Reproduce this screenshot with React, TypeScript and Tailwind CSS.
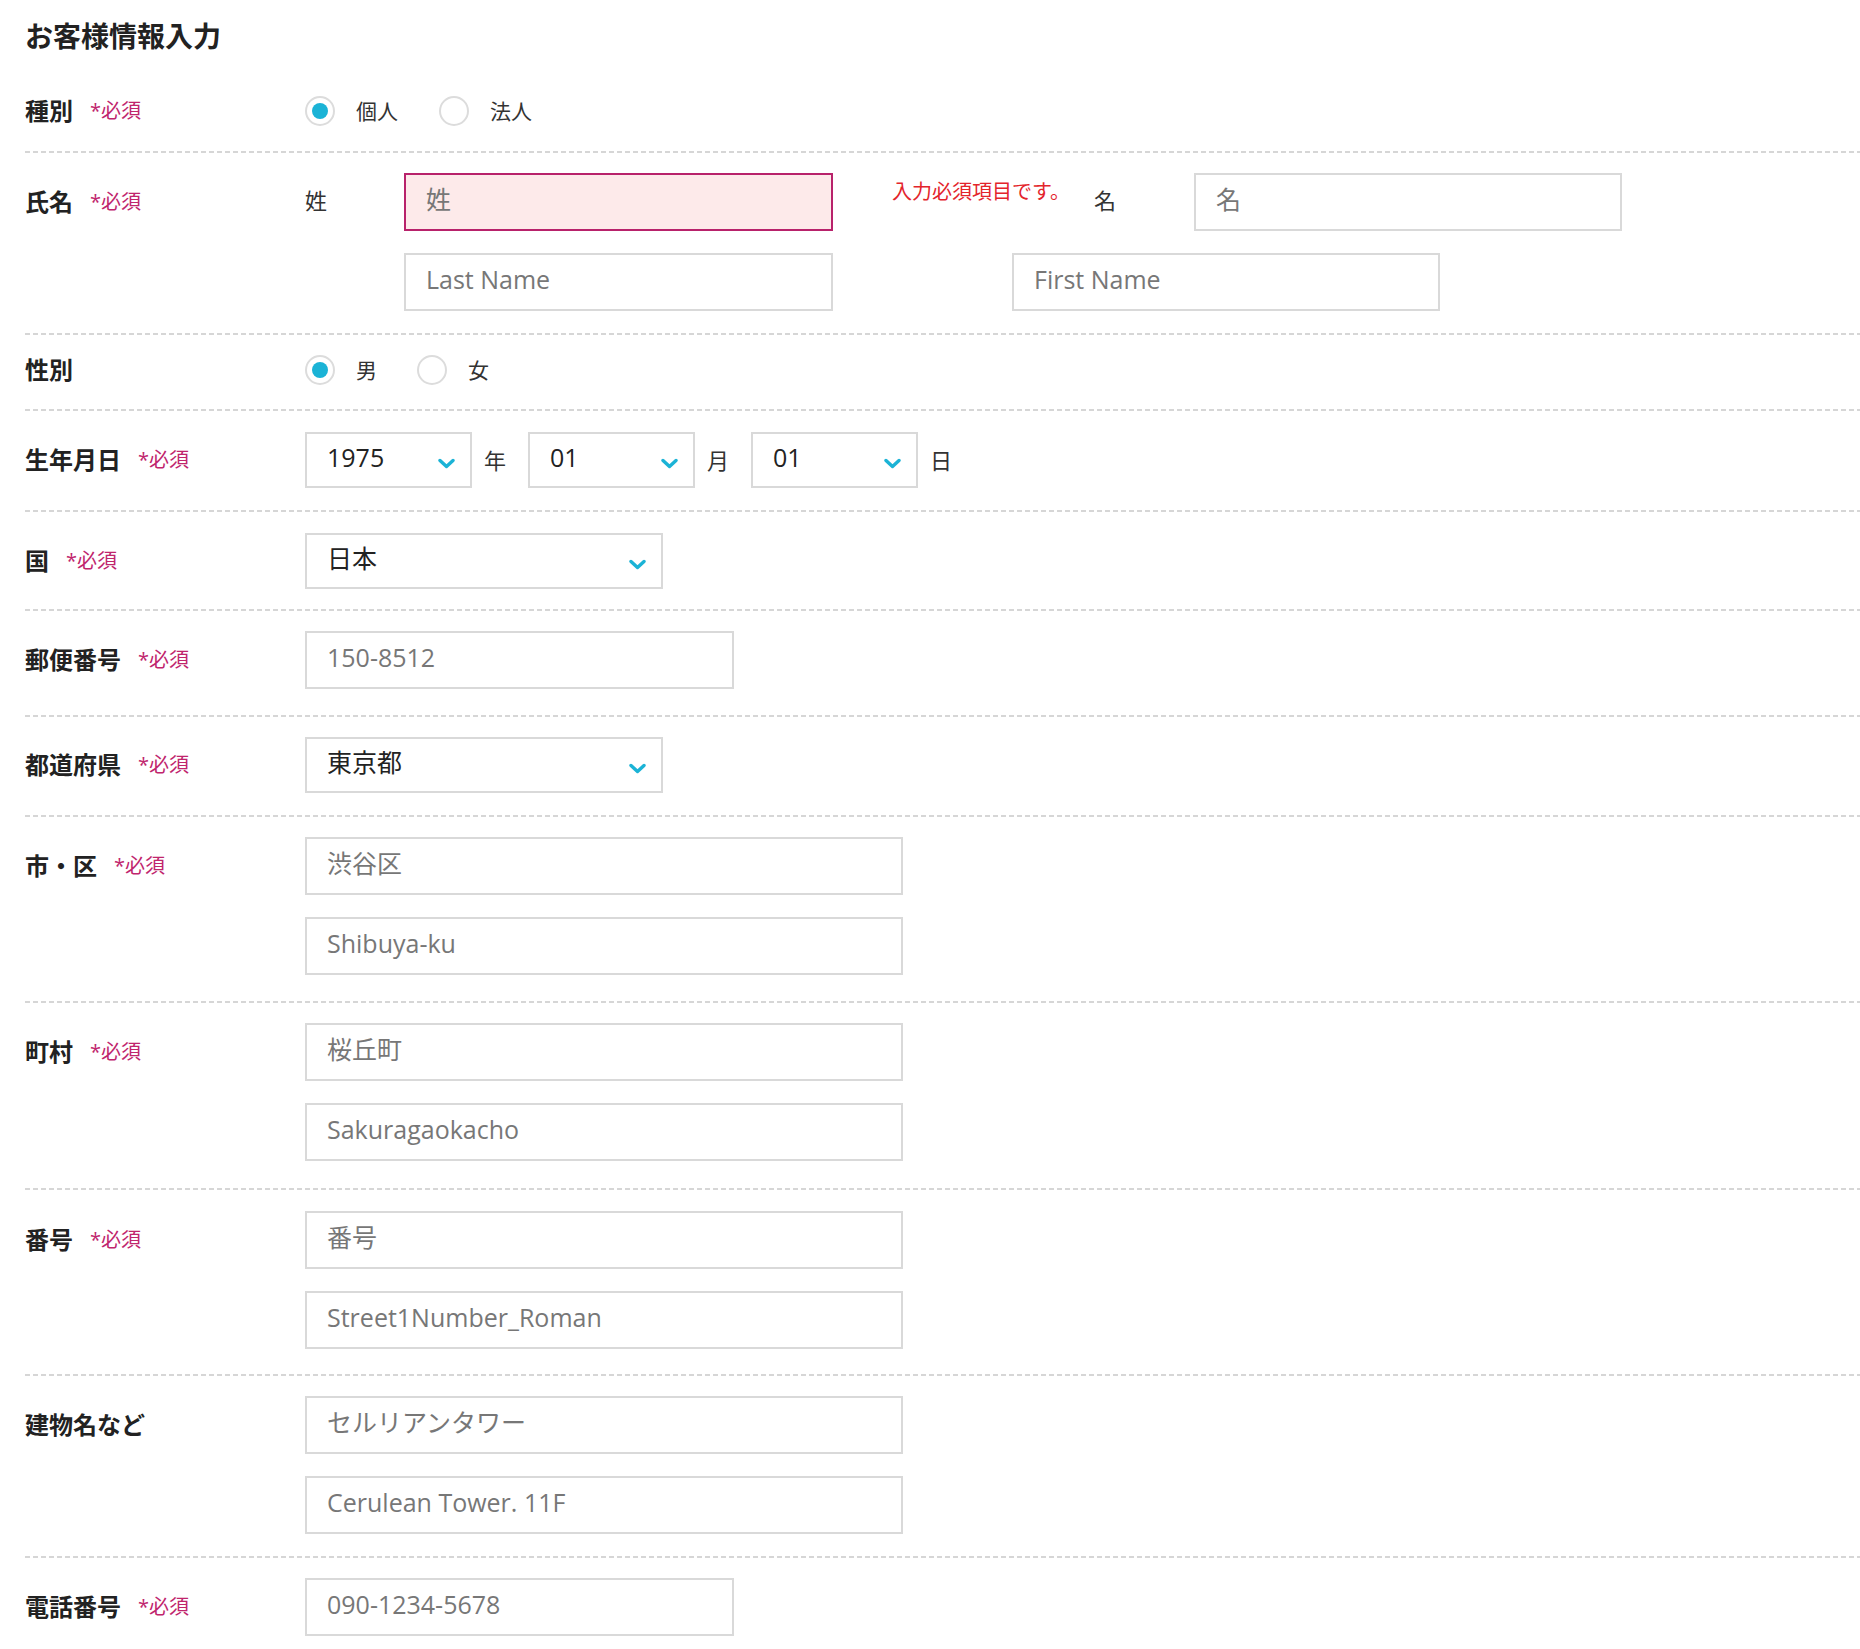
import React, { ReactNode } from 'react';

/**
 * Customer information entry form (お客様情報入力)
 */

interface RowProps {
  label: string;
  required?: boolean;
  /** height of the first control, so the label lines up with it */
  h: string;
  className?: string;
  children: ReactNode;
}

function Row({ label, required, h, className = '', children }: RowProps) {
  return (
    <div className={`flex ${className}`}>
      <div className={`flex w-[280px] shrink-0 items-center ${h}`}>
        <span className="text-[24px] font-bold text-[#222]">{label}</span>
        {required && <span className="ml-[17px] text-[20px] text-[#c0256d]">*必須</span>}
      </div>
      <div className="flex-1">{children}</div>
    </div>
  );
}

function Dash() {
  return (
    <div className="h-[2px] bg-[linear-gradient(to_right,#d6d6d6_5px,transparent_5px)] bg-[length:8px_2px] bg-repeat-x" />
  );
}

function Radio({ checked, label }: { checked?: boolean; label: string }) {
  return (
    <label className="flex h-[30px] items-center">
      <span className="flex h-[30px] w-[30px] items-center justify-center rounded-full border-2 border-[#dcdcdc] bg-white">
        {checked && <span className="h-[16px] w-[16px] rounded-full bg-[#1bb3d6]" />}
      </span>
      <span className="ml-[21px] text-[21px] leading-[30px] text-[#333]">{label}</span>
    </label>
  );
}

interface BoxProps {
  placeholder: string;
  w: string;
  error?: boolean;
}

function TextBox({ placeholder, w, error }: BoxProps) {
  return (
    <input
      readOnly
      placeholder={placeholder}
      className={`block h-[58px] ${w} border-2 pb-[6px] pl-[20px] text-[25px] outline-none placeholder:text-[#777] ${
        error ? 'border-[#b8226b] bg-[#fdeaea]' : 'border-[#d9d9d9] bg-white'
      }`}
    />
  );
}

function Chevron() {
  return (
    <svg width="17" height="11" viewBox="0 0 17 11" className="mt-[6px]">
      <path d="M2 2.5 L8.5 8.5 L15 2.5" fill="none" stroke="#1bb3d6" strokeWidth="3.4" strokeLinecap="round" strokeLinejoin="round" />
    </svg>
  );
}

function SelectBox({ value, w }: { value: string; w: string }) {
  return (
    <div className={`flex h-[56px] ${w} items-center justify-between border-2 border-[#d9d9d9] bg-white pl-[20px] pr-[15px]`}>
      <span className="pb-[5px] text-[25px] text-[#222]">{value}</span>
      <Chevron />
    </div>
  );
}

function Unit({ children }: { children: ReactNode }) {
  return <span className="ml-[12px] mr-[22px] text-[22px] text-[#333]">{children}</span>;
}

export default function App() {
  return (
    <div className="min-h-screen bg-white pl-[25px] pt-[19px] font-['Open_Sans','Noto_Sans_CJK_JP',sans-serif]">
      <h2 className="text-[28px] font-bold leading-[35px] text-[#222]">お客様情報入力</h2>

      {/* 種別 */}
      <Row label="種別" required h="h-[30px]" className="pt-[42px] pb-[25px]">
        <div className="flex items-center gap-[41px]">
          <Radio checked label="個人" />
          <Radio label="法人" />
        </div>
      </Row>
      <Dash />

      {/* 氏名 */}
      <Row label="氏名" required h="h-[58px]" className="pt-[20px] pb-[22px]">
        <div className="flex items-center">
          <span className="w-[99px] pb-[4px] text-[22px] text-[#333]">姓</span>
          <TextBox placeholder="姓" w="w-[429px]" error />
          <span className="ml-[59px] mb-[20px] text-[20px] text-[#e3242b]">入力必須項目です。</span>
          <span className="ml-[24px] w-[100px] pb-[4px] text-[22px] text-[#333]">名</span>
          <TextBox placeholder="名" w="w-[428px]" />
        </div>
        <div className="mt-[22px] flex">
          <div className="ml-[99px]">
            <TextBox placeholder="Last Name" w="w-[429px]" />
          </div>
          <div className="ml-[179px]">
            <TextBox placeholder="First Name" w="w-[428px]" />
          </div>
        </div>
      </Row>
      <Dash />

      {/* 性別 */}
      <Row label="性別" h="h-[30px]" className="pt-[20px] pb-[24px]">
        <div className="flex items-center gap-[40px]">
          <Radio checked label="男" />
          <Radio label="女" />
        </div>
      </Row>
      <Dash />

      {/* 生年月日 */}
      <Row label="生年月日" required h="h-[56px]" className="pt-[21px] pb-[22px]">
        <div className="flex items-center">
          <SelectBox value="1975" w="w-[167px]" />
          <Unit>年</Unit>
          <SelectBox value="01" w="w-[167px]" />
          <Unit>月</Unit>
          <SelectBox value="01" w="w-[167px]" />
          <Unit>日</Unit>
        </div>
      </Row>
      <Dash />

      {/* 国 */}
      <Row label="国" required h="h-[56px]" className="pt-[21px] pb-[20px]">
        <SelectBox value="日本" w="w-[358px]" />
      </Row>
      <Dash />

      {/* 郵便番号 */}
      <Row label="郵便番号" required h="h-[58px]" className="pt-[20px] pb-[26px]">
        <TextBox placeholder="150-8512" w="w-[429px]" />
      </Row>
      <Dash />

      {/* 都道府県 */}
      <Row label="都道府県" required h="h-[56px]" className="pt-[20px] pb-[22px]">
        <SelectBox value="東京都" w="w-[358px]" />
      </Row>
      <Dash />

      {/* 市・区 */}
      <Row label="市・区" required h="h-[58px]" className="pt-[20px] pb-[26px]">
        <div className="flex flex-col gap-[22px]">
          <TextBox placeholder="渋谷区" w="w-[598px]" />
          <TextBox placeholder="Shibuya-ku" w="w-[598px]" />
        </div>
      </Row>
      <Dash />

      {/* 町村 */}
      <Row label="町村" required h="h-[58px]" className="pt-[20px] pb-[27px]">
        <div className="flex flex-col gap-[22px]">
          <TextBox placeholder="桜丘町" w="w-[598px]" />
          <TextBox placeholder="Sakuragaokacho" w="w-[598px]" />
        </div>
      </Row>
      <Dash />

      {/* 番号 */}
      <Row label="番号" required h="h-[58px]" className="pt-[21px] pb-[25px]">
        <div className="flex flex-col gap-[22px]">
          <TextBox placeholder="番号" w="w-[598px]" />
          <TextBox placeholder="Street1Number_Roman" w="w-[598px]" />
        </div>
      </Row>
      <Dash />

      {/* 建物名など */}
      <Row label="建物名など" h="h-[58px]" className="pt-[20px] pb-[22px]">
        <div className="flex flex-col gap-[22px]">
          <TextBox placeholder="セルリアンタワー" w="w-[598px]" />
          <TextBox placeholder="Cerulean Tower. 11F" w="w-[598px]" />
        </div>
      </Row>
      <Dash />

      {/* 電話番号 */}
      <Row label="電話番号" required h="h-[58px]" className="pt-[20px] pb-[13px]">
        <TextBox placeholder="090-1234-5678" w="w-[429px]" />
      </Row>
    </div>
  );
}
